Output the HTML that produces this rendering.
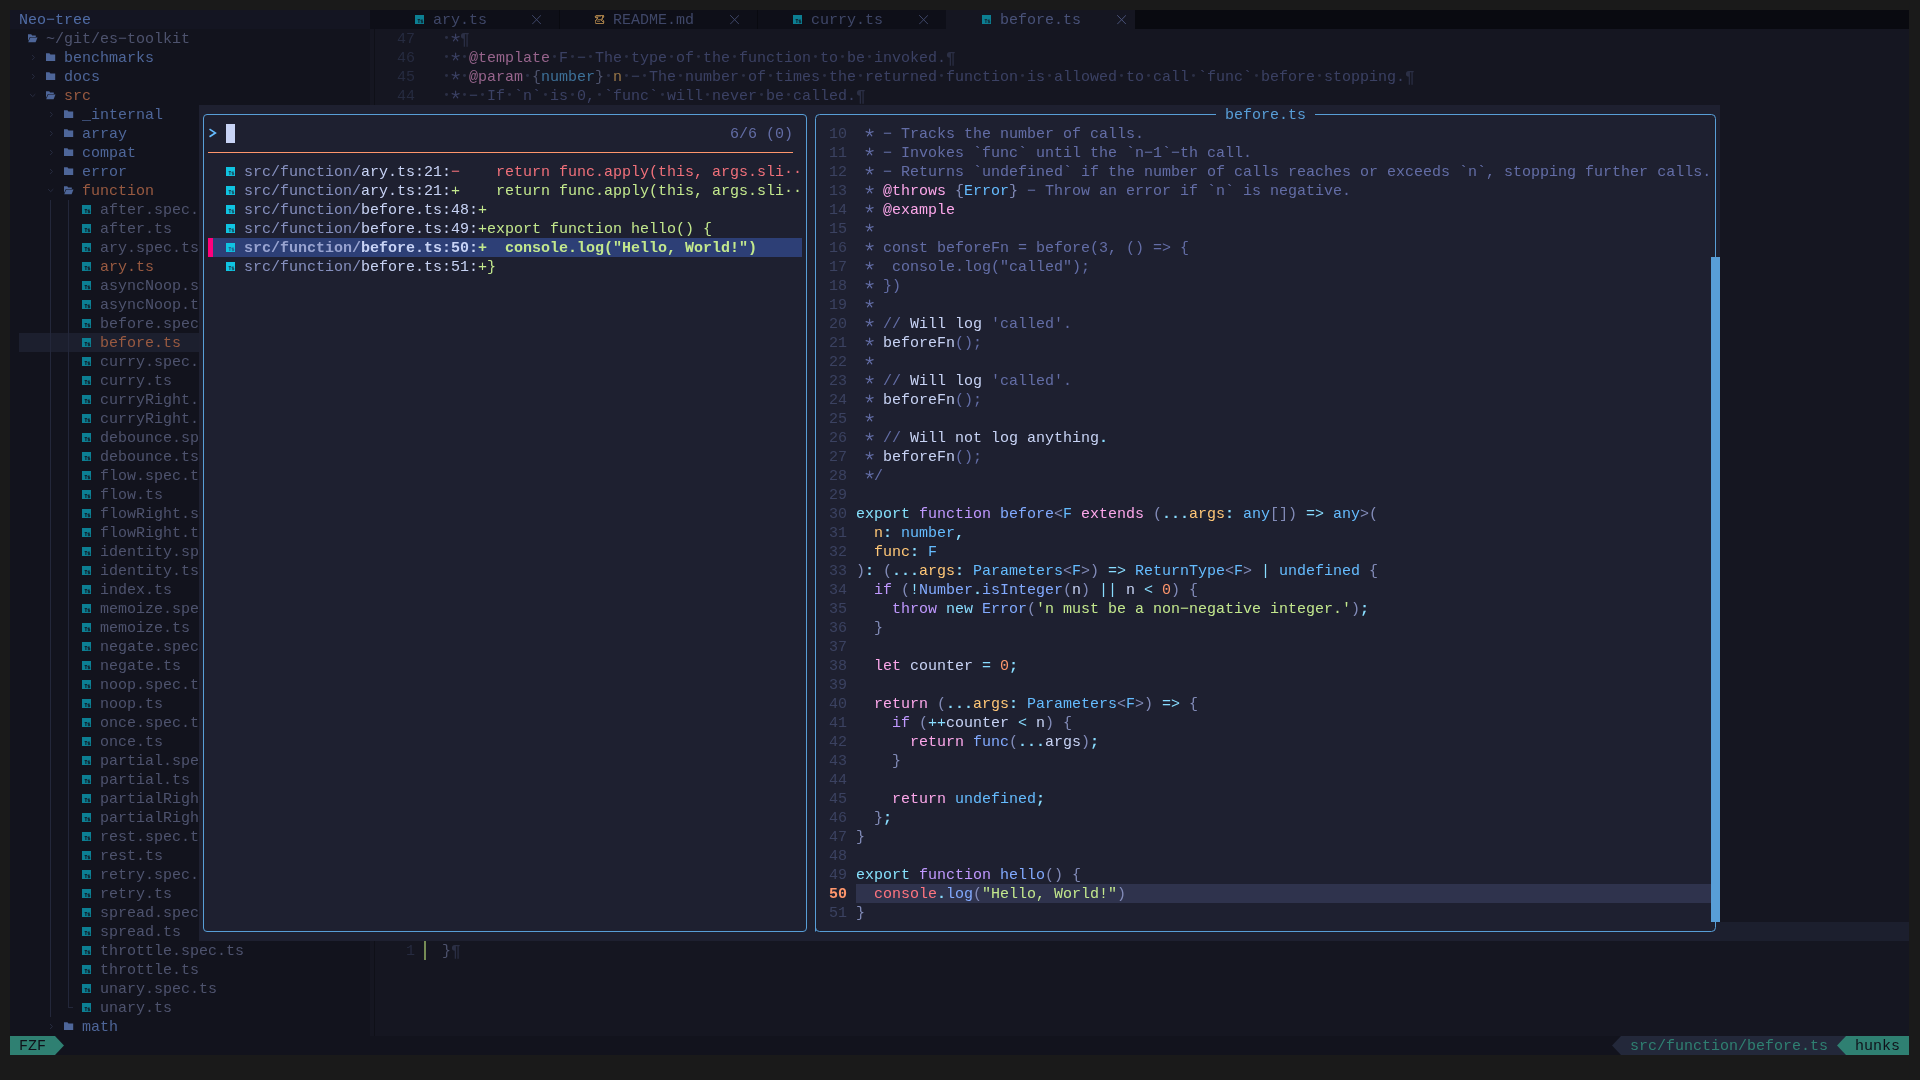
<!DOCTYPE html>
<html><head><meta charset="utf-8"><title>nvim</title>
<style>
html,body{margin:0;padding:0;background:#1a1a1a;width:1920px;height:1080px;overflow:hidden}
body{position:relative;font-family:"Liberation Mono",monospace;font-size:15px;line-height:19px}
.r{position:absolute;display:block}
.t{position:absolute;display:block;height:19px;line-height:19px;white-space:pre;font-family:"Liberation Mono",monospace;font-size:15px;padding-top:1px;box-sizing:border-box}
#L{position:absolute;left:0;top:0;width:1920px;height:1080px;will-change:transform}
.b{font-weight:bold}
.fg{color:#c8d3f5}
.dfg{color:#787f93}
.fgd{color:#828bb8}
.dfgd{color:#4e536e}
.com{color:#636da6}
.dcom{color:#3b4164}
.gut{color:#3b4261}
.dgut{color:#23283a}
.blue{color:#82aaff}
.dblue{color:#4e6699}
.blue1{color:#65bcff}
.dblue1{color:#3d7199}
.blue5{color:#89ddff}
.dblue5{color:#528599}
.cyan{color:#86e1fc}
.dcyan{color:#508797}
.mag{color:#c099ff}
.dmag{color:#735c99}
.pur{color:#fca7ea}
.dpur{color:#97648c}
.yel{color:#ffc777}
.dyel{color:#997747}
.ora{color:#ff966c}
.dora{color:#995a41}
.grn{color:#c3e88d}
.dgrn{color:#758b55}
.red{color:#ff757f}
.dred{color:#f0707a}
.teal{color:#4fd6be}
.dteal{color:#2f8072}
.bor{color:#589ed7}
.dbor{color:#355f81}
.dark3{color:#545c7e}
.ddark3{color:#32374c}
.ddot{color:#2b2f45}
.dnum{color:#262b40}
.dtab{color:#3f4768}
.dtaba{color:#495279}
.dtitle{color:#506ca6}
.dchev{color:#262b3f}
.stdark{color:#10111a}
.dirp{color:#8690bf}
.dirpb{color:#98a3d0}
</style></head><body><div id="L">
<div class="r" style="left:10px;top:10px;width:360px;height:1026px;background:#12131d;"></div>
<div class="r" style="left:10px;top:10px;width:360px;height:19px;background:#141522;"></div>
<div class="r" style="left:19px;top:333px;width:351px;height:19px;background:#1c1f2e;"></div>
<div class="r" style="left:370px;top:29px;width:1539px;height:1007px;background:#151621;"></div>
<div class="r" style="left:374px;top:29px;width:1px;height:1007px;background:#0f1018;"></div>
<div class="r" style="left:370px;top:922px;width:1539px;height:19px;background:#1c1f2e;"></div>
<div class="r" style="left:370px;top:10px;width:1539px;height:19px;background:#0e0f18;"></div>
<div class="r" style="left:946px;top:10px;width:189px;height:19px;background:#151621;"></div>
<div class="r" style="left:1135px;top:10px;width:774px;height:19px;background:#090a10;"></div>
<div class="r" style="left:559px;top:10px;width:1px;height:19px;background:#090a10;"></div>
<div class="r" style="left:757px;top:10px;width:1px;height:19px;background:#090a10;"></div>
<div class="r" style="left:10px;top:1036px;width:1899px;height:19px;background:#12131d;"></div>
<div class="r" style="left:10px;top:1036px;width:45px;height:19px;background:#2f8072;"></div>
<svg class="r" style="left:55px;top:1036px" width="9" height="19"><path d="M0 0L9 9.5L0 19z" fill="#2f8072"/></svg>
<svg class="r" style="left:1612px;top:1036px" width="9" height="19"><path d="M9 0L0 9.5L9 19z" fill="#23283a"/></svg>
<div class="r" style="left:1621px;top:1036px;width:225px;height:19px;background:#23283a;"></div>
<svg class="r" style="left:1837px;top:1036px" width="9" height="19"><path d="M9 0L0 9.5L9 19z" fill="#2f8072"/></svg>
<div class="r" style="left:1846px;top:1036px;width:63px;height:19px;background:#2f8072;"></div>
<span class="t dtitle" style="left:19px;top:10px">Neo−tree</span>
<svg class="r" style="left:28px;top:29px" width="11" height="19"><path d="M0 5.2h3.2l1 1.2h3.6v1.5h-5.9l-1.9 4.2z" fill="#4e6699"/><path d="M2.3 8.6h7.2l-1.9 4.6h-7.4z" fill="#4e6699"/></svg>
<span class="t dfgd" style="left:46px;top:29px">~/git/es−toolkit</span>
<svg class="r" style="left:28px;top:48px" width="9" height="19"><path d="M4.1 7L6.5 9.5L4.1 12" fill="none" stroke="#262b3f" stroke-width="1"/></svg>
<svg class="r" style="left:46px;top:48px" width="10" height="19"><path d="M0 5.2h3.4l1.1 1.3h4.7v6.6h-9.2z" fill="#4e6699"/></svg>
<span class="t dblue" style="left:64px;top:48px">benchmarks</span>
<svg class="r" style="left:28px;top:67px" width="9" height="19"><path d="M4.1 7L6.5 9.5L4.1 12" fill="none" stroke="#262b3f" stroke-width="1"/></svg>
<svg class="r" style="left:46px;top:67px" width="10" height="19"><path d="M0 5.2h3.4l1.1 1.3h4.7v6.6h-9.2z" fill="#4e6699"/></svg>
<span class="t dblue" style="left:64px;top:67px">docs</span>
<svg class="r" style="left:28px;top:86px" width="9" height="19"><path d="M2.1 8.1L4.7 10.7L7.3 8.1" fill="none" stroke="#262b3f" stroke-width="1"/></svg>
<svg class="r" style="left:46px;top:86px" width="11" height="19"><path d="M0 5.2h3.2l1 1.2h3.6v1.5h-5.9l-1.9 4.2z" fill="#4e6699"/><path d="M2.3 8.6h7.2l-1.9 4.6h-7.4z" fill="#4e6699"/></svg>
<span class="t dora" style="left:64px;top:86px">src</span>
<svg class="r" style="left:46px;top:105px" width="9" height="19"><path d="M4.1 7L6.5 9.5L4.1 12" fill="none" stroke="#262b3f" stroke-width="1"/></svg>
<svg class="r" style="left:64px;top:105px" width="10" height="19"><path d="M0 5.2h3.4l1.1 1.3h4.7v6.6h-9.2z" fill="#4e6699"/></svg>
<span class="t dblue" style="left:82px;top:105px">_internal</span>
<svg class="r" style="left:46px;top:124px" width="9" height="19"><path d="M4.1 7L6.5 9.5L4.1 12" fill="none" stroke="#262b3f" stroke-width="1"/></svg>
<svg class="r" style="left:64px;top:124px" width="10" height="19"><path d="M0 5.2h3.4l1.1 1.3h4.7v6.6h-9.2z" fill="#4e6699"/></svg>
<span class="t dblue" style="left:82px;top:124px">array</span>
<svg class="r" style="left:46px;top:143px" width="9" height="19"><path d="M4.1 7L6.5 9.5L4.1 12" fill="none" stroke="#262b3f" stroke-width="1"/></svg>
<svg class="r" style="left:64px;top:143px" width="10" height="19"><path d="M0 5.2h3.4l1.1 1.3h4.7v6.6h-9.2z" fill="#4e6699"/></svg>
<span class="t dblue" style="left:82px;top:143px">compat</span>
<svg class="r" style="left:46px;top:162px" width="9" height="19"><path d="M4.1 7L6.5 9.5L4.1 12" fill="none" stroke="#262b3f" stroke-width="1"/></svg>
<svg class="r" style="left:64px;top:162px" width="10" height="19"><path d="M0 5.2h3.4l1.1 1.3h4.7v6.6h-9.2z" fill="#4e6699"/></svg>
<span class="t dblue" style="left:82px;top:162px">error</span>
<svg class="r" style="left:46px;top:181px" width="9" height="19"><path d="M2.1 8.1L4.7 10.7L7.3 8.1" fill="none" stroke="#262b3f" stroke-width="1"/></svg>
<svg class="r" style="left:64px;top:181px" width="11" height="19"><path d="M0 5.2h3.2l1 1.2h3.6v1.5h-5.9l-1.9 4.2z" fill="#4e6699"/><path d="M2.3 8.6h7.2l-1.9 4.6h-7.4z" fill="#4e6699"/></svg>
<span class="t dora" style="left:82px;top:181px">function</span>
<svg class="r" style="left:82px;top:200px" width="9" height="19"><rect x="0" y="5" width="9" height="9" fill="#0c7f93"/><path d="M2.6 9.6h2.6M3.9 9.6v3.4M6 10.1h1.9M6 10.1v1.2h1.7v1.4h-1.9" fill="none" stroke="#12131d" stroke-width="0.9" opacity="1"/></svg>
<span class="t dfgd" style="left:100px;top:200px">after.spec.ts</span>
<svg class="r" style="left:82px;top:219px" width="9" height="19"><rect x="0" y="5" width="9" height="9" fill="#0c7f93"/><path d="M2.6 9.6h2.6M3.9 9.6v3.4M6 10.1h1.9M6 10.1v1.2h1.7v1.4h-1.9" fill="none" stroke="#12131d" stroke-width="0.9" opacity="1"/></svg>
<span class="t dfgd" style="left:100px;top:219px">after.ts</span>
<svg class="r" style="left:82px;top:238px" width="9" height="19"><rect x="0" y="5" width="9" height="9" fill="#0c7f93"/><path d="M2.6 9.6h2.6M3.9 9.6v3.4M6 10.1h1.9M6 10.1v1.2h1.7v1.4h-1.9" fill="none" stroke="#12131d" stroke-width="0.9" opacity="1"/></svg>
<span class="t dfgd" style="left:100px;top:238px">ary.spec.ts</span>
<svg class="r" style="left:82px;top:257px" width="9" height="19"><rect x="0" y="5" width="9" height="9" fill="#0c7f93"/><path d="M2.6 9.6h2.6M3.9 9.6v3.4M6 10.1h1.9M6 10.1v1.2h1.7v1.4h-1.9" fill="none" stroke="#12131d" stroke-width="0.9" opacity="1"/></svg>
<span class="t dora" style="left:100px;top:257px">ary.ts</span>
<svg class="r" style="left:82px;top:276px" width="9" height="19"><rect x="0" y="5" width="9" height="9" fill="#0c7f93"/><path d="M2.6 9.6h2.6M3.9 9.6v3.4M6 10.1h1.9M6 10.1v1.2h1.7v1.4h-1.9" fill="none" stroke="#12131d" stroke-width="0.9" opacity="1"/></svg>
<span class="t dfgd" style="left:100px;top:276px">asyncNoop.spec.ts</span>
<svg class="r" style="left:82px;top:295px" width="9" height="19"><rect x="0" y="5" width="9" height="9" fill="#0c7f93"/><path d="M2.6 9.6h2.6M3.9 9.6v3.4M6 10.1h1.9M6 10.1v1.2h1.7v1.4h-1.9" fill="none" stroke="#12131d" stroke-width="0.9" opacity="1"/></svg>
<span class="t dfgd" style="left:100px;top:295px">asyncNoop.ts</span>
<svg class="r" style="left:82px;top:314px" width="9" height="19"><rect x="0" y="5" width="9" height="9" fill="#0c7f93"/><path d="M2.6 9.6h2.6M3.9 9.6v3.4M6 10.1h1.9M6 10.1v1.2h1.7v1.4h-1.9" fill="none" stroke="#12131d" stroke-width="0.9" opacity="1"/></svg>
<span class="t dfgd" style="left:100px;top:314px">before.spec.ts</span>
<svg class="r" style="left:82px;top:333px" width="9" height="19"><rect x="0" y="5" width="9" height="9" fill="#0c7f93"/><path d="M2.6 9.6h2.6M3.9 9.6v3.4M6 10.1h1.9M6 10.1v1.2h1.7v1.4h-1.9" fill="none" stroke="#12131d" stroke-width="0.9" opacity="1"/></svg>
<span class="t dora" style="left:100px;top:333px">before.ts</span>
<svg class="r" style="left:82px;top:352px" width="9" height="19"><rect x="0" y="5" width="9" height="9" fill="#0c7f93"/><path d="M2.6 9.6h2.6M3.9 9.6v3.4M6 10.1h1.9M6 10.1v1.2h1.7v1.4h-1.9" fill="none" stroke="#12131d" stroke-width="0.9" opacity="1"/></svg>
<span class="t dfgd" style="left:100px;top:352px">curry.spec.ts</span>
<svg class="r" style="left:82px;top:371px" width="9" height="19"><rect x="0" y="5" width="9" height="9" fill="#0c7f93"/><path d="M2.6 9.6h2.6M3.9 9.6v3.4M6 10.1h1.9M6 10.1v1.2h1.7v1.4h-1.9" fill="none" stroke="#12131d" stroke-width="0.9" opacity="1"/></svg>
<span class="t dfgd" style="left:100px;top:371px">curry.ts</span>
<svg class="r" style="left:82px;top:390px" width="9" height="19"><rect x="0" y="5" width="9" height="9" fill="#0c7f93"/><path d="M2.6 9.6h2.6M3.9 9.6v3.4M6 10.1h1.9M6 10.1v1.2h1.7v1.4h-1.9" fill="none" stroke="#12131d" stroke-width="0.9" opacity="1"/></svg>
<span class="t dfgd" style="left:100px;top:390px">curryRight.spec.ts</span>
<svg class="r" style="left:82px;top:409px" width="9" height="19"><rect x="0" y="5" width="9" height="9" fill="#0c7f93"/><path d="M2.6 9.6h2.6M3.9 9.6v3.4M6 10.1h1.9M6 10.1v1.2h1.7v1.4h-1.9" fill="none" stroke="#12131d" stroke-width="0.9" opacity="1"/></svg>
<span class="t dfgd" style="left:100px;top:409px">curryRight.ts</span>
<svg class="r" style="left:82px;top:428px" width="9" height="19"><rect x="0" y="5" width="9" height="9" fill="#0c7f93"/><path d="M2.6 9.6h2.6M3.9 9.6v3.4M6 10.1h1.9M6 10.1v1.2h1.7v1.4h-1.9" fill="none" stroke="#12131d" stroke-width="0.9" opacity="1"/></svg>
<span class="t dfgd" style="left:100px;top:428px">debounce.spec.ts</span>
<svg class="r" style="left:82px;top:447px" width="9" height="19"><rect x="0" y="5" width="9" height="9" fill="#0c7f93"/><path d="M2.6 9.6h2.6M3.9 9.6v3.4M6 10.1h1.9M6 10.1v1.2h1.7v1.4h-1.9" fill="none" stroke="#12131d" stroke-width="0.9" opacity="1"/></svg>
<span class="t dfgd" style="left:100px;top:447px">debounce.ts</span>
<svg class="r" style="left:82px;top:466px" width="9" height="19"><rect x="0" y="5" width="9" height="9" fill="#0c7f93"/><path d="M2.6 9.6h2.6M3.9 9.6v3.4M6 10.1h1.9M6 10.1v1.2h1.7v1.4h-1.9" fill="none" stroke="#12131d" stroke-width="0.9" opacity="1"/></svg>
<span class="t dfgd" style="left:100px;top:466px">flow.spec.ts</span>
<svg class="r" style="left:82px;top:485px" width="9" height="19"><rect x="0" y="5" width="9" height="9" fill="#0c7f93"/><path d="M2.6 9.6h2.6M3.9 9.6v3.4M6 10.1h1.9M6 10.1v1.2h1.7v1.4h-1.9" fill="none" stroke="#12131d" stroke-width="0.9" opacity="1"/></svg>
<span class="t dfgd" style="left:100px;top:485px">flow.ts</span>
<svg class="r" style="left:82px;top:504px" width="9" height="19"><rect x="0" y="5" width="9" height="9" fill="#0c7f93"/><path d="M2.6 9.6h2.6M3.9 9.6v3.4M6 10.1h1.9M6 10.1v1.2h1.7v1.4h-1.9" fill="none" stroke="#12131d" stroke-width="0.9" opacity="1"/></svg>
<span class="t dfgd" style="left:100px;top:504px">flowRight.spec.ts</span>
<svg class="r" style="left:82px;top:523px" width="9" height="19"><rect x="0" y="5" width="9" height="9" fill="#0c7f93"/><path d="M2.6 9.6h2.6M3.9 9.6v3.4M6 10.1h1.9M6 10.1v1.2h1.7v1.4h-1.9" fill="none" stroke="#12131d" stroke-width="0.9" opacity="1"/></svg>
<span class="t dfgd" style="left:100px;top:523px">flowRight.ts</span>
<svg class="r" style="left:82px;top:542px" width="9" height="19"><rect x="0" y="5" width="9" height="9" fill="#0c7f93"/><path d="M2.6 9.6h2.6M3.9 9.6v3.4M6 10.1h1.9M6 10.1v1.2h1.7v1.4h-1.9" fill="none" stroke="#12131d" stroke-width="0.9" opacity="1"/></svg>
<span class="t dfgd" style="left:100px;top:542px">identity.spec.ts</span>
<svg class="r" style="left:82px;top:561px" width="9" height="19"><rect x="0" y="5" width="9" height="9" fill="#0c7f93"/><path d="M2.6 9.6h2.6M3.9 9.6v3.4M6 10.1h1.9M6 10.1v1.2h1.7v1.4h-1.9" fill="none" stroke="#12131d" stroke-width="0.9" opacity="1"/></svg>
<span class="t dfgd" style="left:100px;top:561px">identity.ts</span>
<svg class="r" style="left:82px;top:580px" width="9" height="19"><rect x="0" y="5" width="9" height="9" fill="#0c7f93"/><path d="M2.6 9.6h2.6M3.9 9.6v3.4M6 10.1h1.9M6 10.1v1.2h1.7v1.4h-1.9" fill="none" stroke="#12131d" stroke-width="0.9" opacity="1"/></svg>
<span class="t dfgd" style="left:100px;top:580px">index.ts</span>
<svg class="r" style="left:82px;top:599px" width="9" height="19"><rect x="0" y="5" width="9" height="9" fill="#0c7f93"/><path d="M2.6 9.6h2.6M3.9 9.6v3.4M6 10.1h1.9M6 10.1v1.2h1.7v1.4h-1.9" fill="none" stroke="#12131d" stroke-width="0.9" opacity="1"/></svg>
<span class="t dfgd" style="left:100px;top:599px">memoize.spec.ts</span>
<svg class="r" style="left:82px;top:618px" width="9" height="19"><rect x="0" y="5" width="9" height="9" fill="#0c7f93"/><path d="M2.6 9.6h2.6M3.9 9.6v3.4M6 10.1h1.9M6 10.1v1.2h1.7v1.4h-1.9" fill="none" stroke="#12131d" stroke-width="0.9" opacity="1"/></svg>
<span class="t dfgd" style="left:100px;top:618px">memoize.ts</span>
<svg class="r" style="left:82px;top:637px" width="9" height="19"><rect x="0" y="5" width="9" height="9" fill="#0c7f93"/><path d="M2.6 9.6h2.6M3.9 9.6v3.4M6 10.1h1.9M6 10.1v1.2h1.7v1.4h-1.9" fill="none" stroke="#12131d" stroke-width="0.9" opacity="1"/></svg>
<span class="t dfgd" style="left:100px;top:637px">negate.spec.ts</span>
<svg class="r" style="left:82px;top:656px" width="9" height="19"><rect x="0" y="5" width="9" height="9" fill="#0c7f93"/><path d="M2.6 9.6h2.6M3.9 9.6v3.4M6 10.1h1.9M6 10.1v1.2h1.7v1.4h-1.9" fill="none" stroke="#12131d" stroke-width="0.9" opacity="1"/></svg>
<span class="t dfgd" style="left:100px;top:656px">negate.ts</span>
<svg class="r" style="left:82px;top:675px" width="9" height="19"><rect x="0" y="5" width="9" height="9" fill="#0c7f93"/><path d="M2.6 9.6h2.6M3.9 9.6v3.4M6 10.1h1.9M6 10.1v1.2h1.7v1.4h-1.9" fill="none" stroke="#12131d" stroke-width="0.9" opacity="1"/></svg>
<span class="t dfgd" style="left:100px;top:675px">noop.spec.ts</span>
<svg class="r" style="left:82px;top:694px" width="9" height="19"><rect x="0" y="5" width="9" height="9" fill="#0c7f93"/><path d="M2.6 9.6h2.6M3.9 9.6v3.4M6 10.1h1.9M6 10.1v1.2h1.7v1.4h-1.9" fill="none" stroke="#12131d" stroke-width="0.9" opacity="1"/></svg>
<span class="t dfgd" style="left:100px;top:694px">noop.ts</span>
<svg class="r" style="left:82px;top:713px" width="9" height="19"><rect x="0" y="5" width="9" height="9" fill="#0c7f93"/><path d="M2.6 9.6h2.6M3.9 9.6v3.4M6 10.1h1.9M6 10.1v1.2h1.7v1.4h-1.9" fill="none" stroke="#12131d" stroke-width="0.9" opacity="1"/></svg>
<span class="t dfgd" style="left:100px;top:713px">once.spec.ts</span>
<svg class="r" style="left:82px;top:732px" width="9" height="19"><rect x="0" y="5" width="9" height="9" fill="#0c7f93"/><path d="M2.6 9.6h2.6M3.9 9.6v3.4M6 10.1h1.9M6 10.1v1.2h1.7v1.4h-1.9" fill="none" stroke="#12131d" stroke-width="0.9" opacity="1"/></svg>
<span class="t dfgd" style="left:100px;top:732px">once.ts</span>
<svg class="r" style="left:82px;top:751px" width="9" height="19"><rect x="0" y="5" width="9" height="9" fill="#0c7f93"/><path d="M2.6 9.6h2.6M3.9 9.6v3.4M6 10.1h1.9M6 10.1v1.2h1.7v1.4h-1.9" fill="none" stroke="#12131d" stroke-width="0.9" opacity="1"/></svg>
<span class="t dfgd" style="left:100px;top:751px">partial.spec.ts</span>
<svg class="r" style="left:82px;top:770px" width="9" height="19"><rect x="0" y="5" width="9" height="9" fill="#0c7f93"/><path d="M2.6 9.6h2.6M3.9 9.6v3.4M6 10.1h1.9M6 10.1v1.2h1.7v1.4h-1.9" fill="none" stroke="#12131d" stroke-width="0.9" opacity="1"/></svg>
<span class="t dfgd" style="left:100px;top:770px">partial.ts</span>
<svg class="r" style="left:82px;top:789px" width="9" height="19"><rect x="0" y="5" width="9" height="9" fill="#0c7f93"/><path d="M2.6 9.6h2.6M3.9 9.6v3.4M6 10.1h1.9M6 10.1v1.2h1.7v1.4h-1.9" fill="none" stroke="#12131d" stroke-width="0.9" opacity="1"/></svg>
<span class="t dfgd" style="left:100px;top:789px">partialRight.spec.ts</span>
<svg class="r" style="left:82px;top:808px" width="9" height="19"><rect x="0" y="5" width="9" height="9" fill="#0c7f93"/><path d="M2.6 9.6h2.6M3.9 9.6v3.4M6 10.1h1.9M6 10.1v1.2h1.7v1.4h-1.9" fill="none" stroke="#12131d" stroke-width="0.9" opacity="1"/></svg>
<span class="t dfgd" style="left:100px;top:808px">partialRight.ts</span>
<svg class="r" style="left:82px;top:827px" width="9" height="19"><rect x="0" y="5" width="9" height="9" fill="#0c7f93"/><path d="M2.6 9.6h2.6M3.9 9.6v3.4M6 10.1h1.9M6 10.1v1.2h1.7v1.4h-1.9" fill="none" stroke="#12131d" stroke-width="0.9" opacity="1"/></svg>
<span class="t dfgd" style="left:100px;top:827px">rest.spec.ts</span>
<svg class="r" style="left:82px;top:846px" width="9" height="19"><rect x="0" y="5" width="9" height="9" fill="#0c7f93"/><path d="M2.6 9.6h2.6M3.9 9.6v3.4M6 10.1h1.9M6 10.1v1.2h1.7v1.4h-1.9" fill="none" stroke="#12131d" stroke-width="0.9" opacity="1"/></svg>
<span class="t dfgd" style="left:100px;top:846px">rest.ts</span>
<svg class="r" style="left:82px;top:865px" width="9" height="19"><rect x="0" y="5" width="9" height="9" fill="#0c7f93"/><path d="M2.6 9.6h2.6M3.9 9.6v3.4M6 10.1h1.9M6 10.1v1.2h1.7v1.4h-1.9" fill="none" stroke="#12131d" stroke-width="0.9" opacity="1"/></svg>
<span class="t dfgd" style="left:100px;top:865px">retry.spec.ts</span>
<svg class="r" style="left:82px;top:884px" width="9" height="19"><rect x="0" y="5" width="9" height="9" fill="#0c7f93"/><path d="M2.6 9.6h2.6M3.9 9.6v3.4M6 10.1h1.9M6 10.1v1.2h1.7v1.4h-1.9" fill="none" stroke="#12131d" stroke-width="0.9" opacity="1"/></svg>
<span class="t dfgd" style="left:100px;top:884px">retry.ts</span>
<svg class="r" style="left:82px;top:903px" width="9" height="19"><rect x="0" y="5" width="9" height="9" fill="#0c7f93"/><path d="M2.6 9.6h2.6M3.9 9.6v3.4M6 10.1h1.9M6 10.1v1.2h1.7v1.4h-1.9" fill="none" stroke="#12131d" stroke-width="0.9" opacity="1"/></svg>
<span class="t dfgd" style="left:100px;top:903px">spread.spec.ts</span>
<svg class="r" style="left:82px;top:922px" width="9" height="19"><rect x="0" y="5" width="9" height="9" fill="#0c7f93"/><path d="M2.6 9.6h2.6M3.9 9.6v3.4M6 10.1h1.9M6 10.1v1.2h1.7v1.4h-1.9" fill="none" stroke="#12131d" stroke-width="0.9" opacity="1"/></svg>
<span class="t dfgd" style="left:100px;top:922px">spread.ts</span>
<svg class="r" style="left:82px;top:941px" width="9" height="19"><rect x="0" y="5" width="9" height="9" fill="#0c7f93"/><path d="M2.6 9.6h2.6M3.9 9.6v3.4M6 10.1h1.9M6 10.1v1.2h1.7v1.4h-1.9" fill="none" stroke="#12131d" stroke-width="0.9" opacity="1"/></svg>
<span class="t dfgd" style="left:100px;top:941px">throttle.spec.ts</span>
<svg class="r" style="left:82px;top:960px" width="9" height="19"><rect x="0" y="5" width="9" height="9" fill="#0c7f93"/><path d="M2.6 9.6h2.6M3.9 9.6v3.4M6 10.1h1.9M6 10.1v1.2h1.7v1.4h-1.9" fill="none" stroke="#12131d" stroke-width="0.9" opacity="1"/></svg>
<span class="t dfgd" style="left:100px;top:960px">throttle.ts</span>
<svg class="r" style="left:82px;top:979px" width="9" height="19"><rect x="0" y="5" width="9" height="9" fill="#0c7f93"/><path d="M2.6 9.6h2.6M3.9 9.6v3.4M6 10.1h1.9M6 10.1v1.2h1.7v1.4h-1.9" fill="none" stroke="#12131d" stroke-width="0.9" opacity="1"/></svg>
<span class="t dfgd" style="left:100px;top:979px">unary.spec.ts</span>
<svg class="r" style="left:82px;top:998px" width="9" height="19"><rect x="0" y="5" width="9" height="9" fill="#0c7f93"/><path d="M2.6 9.6h2.6M3.9 9.6v3.4M6 10.1h1.9M6 10.1v1.2h1.7v1.4h-1.9" fill="none" stroke="#12131d" stroke-width="0.9" opacity="1"/></svg>
<span class="t dfgd" style="left:100px;top:998px">unary.ts</span>
<svg class="r" style="left:46px;top:1017px" width="9" height="19"><path d="M4.1 7L6.5 9.5L4.1 12" fill="none" stroke="#262b3f" stroke-width="1"/></svg>
<svg class="r" style="left:64px;top:1017px" width="10" height="19"><path d="M0 5.2h3.4l1.1 1.3h4.7v6.6h-9.2z" fill="#4e6699"/></svg>
<span class="t dblue" style="left:82px;top:1017px">math</span>
<div class="r" style="left:50px;top:200px;width:1px;height:817px;background:#23273a;"></div>
<div class="r" style="left:68px;top:200px;width:1px;height:808px;background:#23273a;"></div>
<div class="r" style="left:68px;top:1007px;width:5px;height:1px;background:#23273a;"></div>
<svg class="r" style="left:415px;top:10px" width="9" height="19"><rect x="0" y="5" width="9" height="9" fill="#0c7f93"/><path d="M2.6 9.6h2.6M3.9 9.6v3.4M6 10.1h1.9M6 10.1v1.2h1.7v1.4h-1.9" fill="none" stroke="#0e0f18" stroke-width="0.9" opacity="0.85"/></svg>
<span class="t dtab" style="left:433px;top:10px">ary.ts</span>
<svg class="r" style="left:532px;top:10px" width="9" height="19"><path d="M0.2 5.2l8.8 9M9 5.2l-8.8 9" stroke="#3f4768" stroke-width="1" fill="none"/></svg>
<div class="r" style="left:595px;top:15px;width:1px;height:1px;background:#a37c47;opacity:0.3"></div>
<div class="r" style="left:596px;top:15px;width:1px;height:1px;background:#a37c47;opacity:1"></div>
<div class="r" style="left:597px;top:15px;width:1px;height:1px;background:#a37c47;opacity:1"></div>
<div class="r" style="left:598px;top:15px;width:1px;height:1px;background:#a37c47;opacity:1"></div>
<div class="r" style="left:599px;top:15px;width:1px;height:1px;background:#a37c47;opacity:1"></div>
<div class="r" style="left:600px;top:15px;width:1px;height:1px;background:#a37c47;opacity:1"></div>
<div class="r" style="left:601px;top:15px;width:1px;height:1px;background:#a37c47;opacity:1"></div>
<div class="r" style="left:602px;top:15px;width:1px;height:1px;background:#a37c47;opacity:1"></div>
<div class="r" style="left:603px;top:15px;width:1px;height:1px;background:#a37c47;opacity:1"></div>
<div class="r" style="left:594px;top:16px;width:1px;height:1px;background:#a37c47;opacity:0.2"></div>
<div class="r" style="left:595px;top:16px;width:1px;height:1px;background:#a37c47;opacity:1"></div>
<div class="r" style="left:596px;top:16px;width:1px;height:1px;background:#a37c47;opacity:0.6"></div>
<div class="r" style="left:597px;top:16px;width:1px;height:1px;background:#a37c47;opacity:0.6"></div>
<div class="r" style="left:598px;top:16px;width:1px;height:1px;background:#a37c47;opacity:0.6"></div>
<div class="r" style="left:599px;top:16px;width:1px;height:1px;background:#a37c47;opacity:0.6"></div>
<div class="r" style="left:600px;top:16px;width:1px;height:1px;background:#a37c47;opacity:0.6"></div>
<div class="r" style="left:602px;top:16px;width:1px;height:1px;background:#a37c47;opacity:1"></div>
<div class="r" style="left:603px;top:16px;width:1px;height:1px;background:#a37c47;opacity:1"></div>
<div class="r" style="left:604px;top:16px;width:1px;height:1px;background:#a37c47;opacity:0.2"></div>
<div class="r" style="left:595px;top:17px;width:1px;height:1px;background:#a37c47;opacity:1"></div>
<div class="r" style="left:596px;top:17px;width:1px;height:1px;background:#a37c47;opacity:1"></div>
<div class="r" style="left:597px;top:17px;width:1px;height:1px;background:#a37c47;opacity:1"></div>
<div class="r" style="left:598px;top:17px;width:1px;height:1px;background:#a37c47;opacity:0.2"></div>
<div class="r" style="left:602px;top:17px;width:1px;height:1px;background:#a37c47;opacity:1"></div>
<div class="r" style="left:603px;top:17px;width:1px;height:1px;background:#a37c47;opacity:0.8"></div>
<div class="r" style="left:596px;top:18px;width:1px;height:1px;background:#a37c47;opacity:0.5"></div>
<div class="r" style="left:597px;top:18px;width:1px;height:1px;background:#a37c47;opacity:1"></div>
<div class="r" style="left:601px;top:18px;width:1px;height:1px;background:#a37c47;opacity:0.5"></div>
<div class="r" style="left:602px;top:18px;width:1px;height:1px;background:#a37c47;opacity:1"></div>
<div class="r" style="left:596px;top:19px;width:1px;height:1px;background:#a37c47;opacity:1"></div>
<div class="r" style="left:597px;top:19px;width:1px;height:1px;background:#a37c47;opacity:0.4"></div>
<div class="r" style="left:598px;top:19px;width:1px;height:1px;background:#a37c47;opacity:0.8"></div>
<div class="r" style="left:599px;top:19px;width:1px;height:1px;background:#a37c47;opacity:0.8"></div>
<div class="r" style="left:600px;top:19px;width:1px;height:1px;background:#a37c47;opacity:0.8"></div>
<div class="r" style="left:601px;top:19px;width:1px;height:1px;background:#a37c47;opacity:0.8"></div>
<div class="r" style="left:602px;top:19px;width:1px;height:1px;background:#a37c47;opacity:0.8"></div>
<div class="r" style="left:595px;top:20px;width:1px;height:1px;background:#a37c47;opacity:1"></div>
<div class="r" style="left:596px;top:20px;width:1px;height:1px;background:#a37c47;opacity:0.5"></div>
<div class="r" style="left:597px;top:20px;width:1px;height:1px;background:#a37c47;opacity:0.3"></div>
<div class="r" style="left:598px;top:20px;width:1px;height:1px;background:#a37c47;opacity:0.3"></div>
<div class="r" style="left:599px;top:20px;width:1px;height:1px;background:#a37c47;opacity:0.3"></div>
<div class="r" style="left:600px;top:20px;width:1px;height:1px;background:#a37c47;opacity:0.3"></div>
<div class="r" style="left:601px;top:20px;width:1px;height:1px;background:#a37c47;opacity:1"></div>
<div class="r" style="left:602px;top:20px;width:1px;height:1px;background:#a37c47;opacity:0.2"></div>
<div class="r" style="left:603px;top:20px;width:1px;height:1px;background:#a37c47;opacity:0.8"></div>
<div class="r" style="left:595px;top:21px;width:1px;height:1px;background:#a37c47;opacity:0.8"></div>
<div class="r" style="left:597px;top:21px;width:1px;height:1px;background:#a37c47;opacity:0.6"></div>
<div class="r" style="left:598px;top:21px;width:1px;height:1px;background:#a37c47;opacity:0.6"></div>
<div class="r" style="left:599px;top:21px;width:1px;height:1px;background:#a37c47;opacity:0.6"></div>
<div class="r" style="left:602px;top:21px;width:1px;height:1px;background:#a37c47;opacity:1"></div>
<div class="r" style="left:603px;top:21px;width:1px;height:1px;background:#a37c47;opacity:1"></div>
<div class="r" style="left:604px;top:21px;width:1px;height:1px;background:#a37c47;opacity:0.2"></div>
<div class="r" style="left:595px;top:22px;width:1px;height:1px;background:#a37c47;opacity:0.8"></div>
<div class="r" style="left:596px;top:22px;width:1px;height:1px;background:#a37c47;opacity:0.1"></div>
<div class="r" style="left:603px;top:22px;width:1px;height:1px;background:#a37c47;opacity:1"></div>
<div class="r" style="left:604px;top:22px;width:1px;height:1px;background:#a37c47;opacity:0.2"></div>
<div class="r" style="left:595px;top:23px;width:1px;height:1px;background:#a37c47;opacity:0.6"></div>
<div class="r" style="left:596px;top:23px;width:1px;height:1px;background:#a37c47;opacity:1"></div>
<div class="r" style="left:597px;top:23px;width:1px;height:1px;background:#a37c47;opacity:1"></div>
<div class="r" style="left:598px;top:23px;width:1px;height:1px;background:#a37c47;opacity:1"></div>
<div class="r" style="left:599px;top:23px;width:1px;height:1px;background:#a37c47;opacity:1"></div>
<div class="r" style="left:600px;top:23px;width:1px;height:1px;background:#a37c47;opacity:1"></div>
<div class="r" style="left:601px;top:23px;width:1px;height:1px;background:#a37c47;opacity:1"></div>
<div class="r" style="left:602px;top:23px;width:1px;height:1px;background:#a37c47;opacity:1"></div>
<div class="r" style="left:603px;top:23px;width:1px;height:1px;background:#a37c47;opacity:0.9"></div>
<span class="t dtab" style="left:613px;top:10px">README.md</span>
<svg class="r" style="left:730px;top:10px" width="9" height="19"><path d="M0.2 5.2l8.8 9M9 5.2l-8.8 9" stroke="#3f4768" stroke-width="1" fill="none"/></svg>
<svg class="r" style="left:793px;top:10px" width="9" height="19"><rect x="0" y="5" width="9" height="9" fill="#0c7f93"/><path d="M2.6 9.6h2.6M3.9 9.6v3.4M6 10.1h1.9M6 10.1v1.2h1.7v1.4h-1.9" fill="none" stroke="#0e0f18" stroke-width="0.9" opacity="0.85"/></svg>
<span class="t dtab" style="left:811px;top:10px">curry.ts</span>
<svg class="r" style="left:919px;top:10px" width="9" height="19"><path d="M0.2 5.2l8.8 9M9 5.2l-8.8 9" stroke="#3f4768" stroke-width="1" fill="none"/></svg>
<svg class="r" style="left:982px;top:10px" width="9" height="19"><rect x="0" y="5" width="9" height="9" fill="#0c7f93"/><path d="M2.6 9.6h2.6M3.9 9.6v3.4M6 10.1h1.9M6 10.1v1.2h1.7v1.4h-1.9" fill="none" stroke="#151621" stroke-width="0.9" opacity="0.85"/></svg>
<span class="t dtaba" style="left:1000px;top:10px">before.ts</span>
<svg class="r" style="left:1117px;top:10px" width="9" height="19"><path d="M0.2 5.2l8.8 9M9 5.2l-8.8 9" stroke="#495279" stroke-width="1" fill="none"/></svg>
<span class="t dnum" style="left:397px;top:29px">47</span>
<div class="r" style="left:445.1px;top:36.3px;width:2.8px;height:2.8px;background:#2b2f45;border-radius:50%"></div>
<svg class="r" style="left:451px;top:29px" width="9" height="19"><path d="M4.60 8.80L4.60 5.10M4.60 8.80L8.12 7.66M4.60 8.80L6.77 11.79M4.60 8.80L2.43 11.79M4.60 8.80L1.08 7.66" fill="none" stroke="#3b4164" stroke-width="1.15" stroke-linecap="round"/></svg>
<span class="t b ddot" style="left:460px;top:30px;font-size:16px">¶</span>
<span class="t dnum" style="left:397px;top:48px">46</span>
<div class="r" style="left:445.1px;top:55.3px;width:2.8px;height:2.8px;background:#2b2f45;border-radius:50%"></div>
<svg class="r" style="left:451px;top:48px" width="9" height="19"><path d="M4.60 8.80L4.60 5.10M4.60 8.80L8.12 7.66M4.60 8.80L6.77 11.79M4.60 8.80L2.43 11.79M4.60 8.80L1.08 7.66" fill="none" stroke="#3b4164" stroke-width="1.15" stroke-linecap="round"/></svg>
<div class="r" style="left:463.1px;top:55.3px;width:2.8px;height:2.8px;background:#2b2f45;border-radius:50%"></div>
<span class="t dpur" style="left:469px;top:48px">@template</span>
<div class="r" style="left:553.1px;top:55.3px;width:2.8px;height:2.8px;background:#2b2f45;border-radius:50%"></div>
<span class="t dcom" style="left:559px;top:48px">F</span>
<div class="r" style="left:571.1px;top:55.3px;width:2.8px;height:2.8px;background:#2b2f45;border-radius:50%"></div>
<span class="t dcom" style="left:577px;top:48px">−</span>
<div class="r" style="left:589.1px;top:55.3px;width:2.8px;height:2.8px;background:#2b2f45;border-radius:50%"></div>
<span class="t dcom" style="left:595px;top:48px">The</span>
<div class="r" style="left:625.1px;top:55.3px;width:2.8px;height:2.8px;background:#2b2f45;border-radius:50%"></div>
<span class="t dcom" style="left:631px;top:48px">type</span>
<div class="r" style="left:670.1px;top:55.3px;width:2.8px;height:2.8px;background:#2b2f45;border-radius:50%"></div>
<span class="t dcom" style="left:676px;top:48px">of</span>
<div class="r" style="left:697.1px;top:55.3px;width:2.8px;height:2.8px;background:#2b2f45;border-radius:50%"></div>
<span class="t dcom" style="left:703px;top:48px">the</span>
<div class="r" style="left:733.1px;top:55.3px;width:2.8px;height:2.8px;background:#2b2f45;border-radius:50%"></div>
<span class="t dcom" style="left:739px;top:48px">function</span>
<div class="r" style="left:814.1px;top:55.3px;width:2.8px;height:2.8px;background:#2b2f45;border-radius:50%"></div>
<span class="t dcom" style="left:820px;top:48px">to</span>
<div class="r" style="left:841.1px;top:55.3px;width:2.8px;height:2.8px;background:#2b2f45;border-radius:50%"></div>
<span class="t dcom" style="left:847px;top:48px">be</span>
<div class="r" style="left:868.1px;top:55.3px;width:2.8px;height:2.8px;background:#2b2f45;border-radius:50%"></div>
<span class="t dcom" style="left:874px;top:48px">invoked.</span>
<span class="t b ddot" style="left:946px;top:49px;font-size:16px">¶</span>
<span class="t dnum" style="left:397px;top:67px">45</span>
<div class="r" style="left:445.1px;top:74.3px;width:2.8px;height:2.8px;background:#2b2f45;border-radius:50%"></div>
<svg class="r" style="left:451px;top:67px" width="9" height="19"><path d="M4.60 8.80L4.60 5.10M4.60 8.80L8.12 7.66M4.60 8.80L6.77 11.79M4.60 8.80L2.43 11.79M4.60 8.80L1.08 7.66" fill="none" stroke="#3b4164" stroke-width="1.15" stroke-linecap="round"/></svg>
<div class="r" style="left:463.1px;top:74.3px;width:2.8px;height:2.8px;background:#2b2f45;border-radius:50%"></div>
<span class="t dpur" style="left:469px;top:67px">@param</span>
<div class="r" style="left:526.1px;top:74.3px;width:2.8px;height:2.8px;background:#2b2f45;border-radius:50%"></div>
<span class="t dfgd" style="left:532px;top:67px">{</span>
<span class="t dblue1" style="left:541px;top:67px">number</span>
<span class="t dfgd" style="left:595px;top:67px">}</span>
<div class="r" style="left:607.1px;top:74.3px;width:2.8px;height:2.8px;background:#2b2f45;border-radius:50%"></div>
<span class="t dyel" style="left:613px;top:67px">n</span>
<div class="r" style="left:625.1px;top:74.3px;width:2.8px;height:2.8px;background:#2b2f45;border-radius:50%"></div>
<span class="t dcom" style="left:631px;top:67px">−</span>
<div class="r" style="left:643.1px;top:74.3px;width:2.8px;height:2.8px;background:#2b2f45;border-radius:50%"></div>
<span class="t dcom" style="left:649px;top:67px">The</span>
<div class="r" style="left:679.1px;top:74.3px;width:2.8px;height:2.8px;background:#2b2f45;border-radius:50%"></div>
<span class="t dcom" style="left:685px;top:67px">number</span>
<div class="r" style="left:742.1px;top:74.3px;width:2.8px;height:2.8px;background:#2b2f45;border-radius:50%"></div>
<span class="t dcom" style="left:748px;top:67px">of</span>
<div class="r" style="left:769.1px;top:74.3px;width:2.8px;height:2.8px;background:#2b2f45;border-radius:50%"></div>
<span class="t dcom" style="left:775px;top:67px">times</span>
<div class="r" style="left:823.1px;top:74.3px;width:2.8px;height:2.8px;background:#2b2f45;border-radius:50%"></div>
<span class="t dcom" style="left:829px;top:67px">the</span>
<div class="r" style="left:859.1px;top:74.3px;width:2.8px;height:2.8px;background:#2b2f45;border-radius:50%"></div>
<span class="t dcom" style="left:865px;top:67px">returned</span>
<div class="r" style="left:940.1px;top:74.3px;width:2.8px;height:2.8px;background:#2b2f45;border-radius:50%"></div>
<span class="t dcom" style="left:946px;top:67px">function</span>
<div class="r" style="left:1021.1px;top:74.3px;width:2.8px;height:2.8px;background:#2b2f45;border-radius:50%"></div>
<span class="t dcom" style="left:1027px;top:67px">is</span>
<div class="r" style="left:1048.1px;top:74.3px;width:2.8px;height:2.8px;background:#2b2f45;border-radius:50%"></div>
<span class="t dcom" style="left:1054px;top:67px">allowed</span>
<div class="r" style="left:1120.1px;top:74.3px;width:2.8px;height:2.8px;background:#2b2f45;border-radius:50%"></div>
<span class="t dcom" style="left:1126px;top:67px">to</span>
<div class="r" style="left:1147.1px;top:74.3px;width:2.8px;height:2.8px;background:#2b2f45;border-radius:50%"></div>
<span class="t dcom" style="left:1153px;top:67px">call</span>
<div class="r" style="left:1192.1px;top:74.3px;width:2.8px;height:2.8px;background:#2b2f45;border-radius:50%"></div>
<span class="t dcom" style="left:1198px;top:67px">`func`</span>
<div class="r" style="left:1255.1px;top:74.3px;width:2.8px;height:2.8px;background:#2b2f45;border-radius:50%"></div>
<span class="t dcom" style="left:1261px;top:67px">before</span>
<div class="r" style="left:1318.1px;top:74.3px;width:2.8px;height:2.8px;background:#2b2f45;border-radius:50%"></div>
<span class="t dcom" style="left:1324px;top:67px">stopping.</span>
<span class="t b ddot" style="left:1405px;top:68px;font-size:16px">¶</span>
<span class="t dnum" style="left:397px;top:86px">44</span>
<div class="r" style="left:445.1px;top:93.3px;width:2.8px;height:2.8px;background:#2b2f45;border-radius:50%"></div>
<svg class="r" style="left:451px;top:86px" width="9" height="19"><path d="M4.60 8.80L4.60 5.10M4.60 8.80L8.12 7.66M4.60 8.80L6.77 11.79M4.60 8.80L2.43 11.79M4.60 8.80L1.08 7.66" fill="none" stroke="#3b4164" stroke-width="1.15" stroke-linecap="round"/></svg>
<div class="r" style="left:463.1px;top:93.3px;width:2.8px;height:2.8px;background:#2b2f45;border-radius:50%"></div>
<span class="t dcom" style="left:469px;top:86px">−</span>
<div class="r" style="left:481.1px;top:93.3px;width:2.8px;height:2.8px;background:#2b2f45;border-radius:50%"></div>
<span class="t dcom" style="left:487px;top:86px">If</span>
<div class="r" style="left:508.1px;top:93.3px;width:2.8px;height:2.8px;background:#2b2f45;border-radius:50%"></div>
<span class="t dcom" style="left:514px;top:86px">`n`</span>
<div class="r" style="left:544.1px;top:93.3px;width:2.8px;height:2.8px;background:#2b2f45;border-radius:50%"></div>
<span class="t dcom" style="left:550px;top:86px">is</span>
<div class="r" style="left:571.1px;top:93.3px;width:2.8px;height:2.8px;background:#2b2f45;border-radius:50%"></div>
<span class="t dcom" style="left:577px;top:86px">0,</span>
<div class="r" style="left:598.1px;top:93.3px;width:2.8px;height:2.8px;background:#2b2f45;border-radius:50%"></div>
<span class="t dcom" style="left:604px;top:86px">`func`</span>
<div class="r" style="left:661.1px;top:93.3px;width:2.8px;height:2.8px;background:#2b2f45;border-radius:50%"></div>
<span class="t dcom" style="left:667px;top:86px">will</span>
<div class="r" style="left:706.1px;top:93.3px;width:2.8px;height:2.8px;background:#2b2f45;border-radius:50%"></div>
<span class="t dcom" style="left:712px;top:86px">never</span>
<div class="r" style="left:760.1px;top:93.3px;width:2.8px;height:2.8px;background:#2b2f45;border-radius:50%"></div>
<span class="t dcom" style="left:766px;top:86px">be</span>
<div class="r" style="left:787.1px;top:93.3px;width:2.8px;height:2.8px;background:#2b2f45;border-radius:50%"></div>
<span class="t dcom" style="left:793px;top:86px">called.</span>
<span class="t b ddot" style="left:856px;top:87px;font-size:16px">¶</span>
<span class="t dnum" style="left:406px;top:941px">1</span>
<span class="t dfgd" style="left:442px;top:941px">}</span>
<span class="t b ddot" style="left:451px;top:942px;font-size:16px">¶</span>
<div class="r" style="left:424px;top:941px;width:2px;height:19px;background:#758b55;"></div>
<span class="t stdark" style="left:19px;top:1036px">FZF</span>
<span class="t dteal" style="left:1630px;top:1036px">src/function/before.ts</span>
<span class="t stdark" style="left:1855px;top:1036px">hunks</span>
<div class="r" style="left:199px;top:105px;width:1521px;height:836px;background:#1e2030;"></div>
<div class="r" style="left:203px;top:114px;width:604px;height:818px;box-sizing:border-box;border:1px solid #589ed7;border-radius:4px"></div>
<svg class="r" style="left:0;top:0" width="1920" height="1080" shape-rendering="auto"><g fill="none" stroke="#589ed7" stroke-width="1"><path d="M815.5 931.5V118.5a4 4 0 0 1 4 -4H1216"/><path d="M1315 114.5H1711.5a4 4 0 0 1 4 4V257"/><path d="M815.5 927.5a4 4 0 0 0 4 4H1711.5a4 4 0 0 0 4 -4V922"/></g></svg>
<div class="r" style="left:1711px;top:257px;width:9px;height:665px;background:#589ed7;"></div>
<span class="t bor" style="left:1225px;top:105px">before.ts</span>
<svg class="r" style="left:208px;top:124px" width="9" height="19"><path d="M1.5 5.1L7.3 8.9L1.5 12.7" fill="none" stroke="#65bcff" stroke-width="1.7"/></svg>
<div class="r" style="left:226px;top:124px;width:9px;height:19px;background:#c8d3f5;"></div>
<span class="t com" style="left:730px;top:124px">6/6 (0)</span>
<div class="r" style="left:208px;top:152px;width:585px;height:1px;background:#ff966c;"></div>
<div class="r" style="left:212.5px;top:238px;width:589.5px;height:19px;background:#2d3f76;"></div>
<div class="r" style="left:208px;top:238px;width:4.5px;height:19px;background:#ff007c;"></div>
<svg class="r" style="left:226px;top:162px" width="9" height="19"><rect x="0" y="5" width="9" height="9" fill="#10c4e2"/><path d="M2.6 9.6h2.6M3.9 9.6v3.4M6 10.1h1.9M6 10.1v1.2h1.7v1.4h-1.9" fill="none" stroke="#1e2030" stroke-width="0.9" opacity="0.8"/></svg>
<span class="t dirp" style="left:244px;top:162px">src/function/</span>
<span class="t fg" style="left:361px;top:162px">ary.ts:21:</span>
<span class="t dred" style="left:451px;top:162px">−    return func.apply(this, args.sli··</span>
<svg class="r" style="left:226px;top:181px" width="9" height="19"><rect x="0" y="5" width="9" height="9" fill="#10c4e2"/><path d="M2.6 9.6h2.6M3.9 9.6v3.4M6 10.1h1.9M6 10.1v1.2h1.7v1.4h-1.9" fill="none" stroke="#1e2030" stroke-width="0.9" opacity="0.8"/></svg>
<span class="t dirp" style="left:244px;top:181px">src/function/</span>
<span class="t fg" style="left:361px;top:181px">ary.ts:21:</span>
<span class="t grn" style="left:451px;top:181px">+    return func.apply(this, args.sli··</span>
<svg class="r" style="left:226px;top:200px" width="9" height="19"><rect x="0" y="5" width="9" height="9" fill="#10c4e2"/><path d="M2.6 9.6h2.6M3.9 9.6v3.4M6 10.1h1.9M6 10.1v1.2h1.7v1.4h-1.9" fill="none" stroke="#1e2030" stroke-width="0.9" opacity="0.8"/></svg>
<span class="t dirp" style="left:244px;top:200px">src/function/</span>
<span class="t fg" style="left:361px;top:200px">before.ts:48:</span>
<span class="t grn" style="left:478px;top:200px">+</span>
<svg class="r" style="left:226px;top:219px" width="9" height="19"><rect x="0" y="5" width="9" height="9" fill="#10c4e2"/><path d="M2.6 9.6h2.6M3.9 9.6v3.4M6 10.1h1.9M6 10.1v1.2h1.7v1.4h-1.9" fill="none" stroke="#1e2030" stroke-width="0.9" opacity="0.8"/></svg>
<span class="t dirp" style="left:244px;top:219px">src/function/</span>
<span class="t fg" style="left:361px;top:219px">before.ts:49:</span>
<span class="t grn" style="left:478px;top:219px">+export function hello() {</span>
<svg class="r" style="left:226px;top:238px" width="9" height="19"><rect x="0" y="5" width="9" height="9" fill="#10c4e2"/><path d="M2.6 9.6h2.6M3.9 9.6v3.4M6 10.1h1.9M6 10.1v1.2h1.7v1.4h-1.9" fill="none" stroke="#2d3f76" stroke-width="0.9" opacity="0.8"/></svg>
<span class="t dirpb b" style="left:244px;top:238px">src/function/</span>
<span class="t fg b" style="left:361px;top:238px">before.ts:50:</span>
<span class="t grn b" style="left:478px;top:238px">+  console.log(&quot;Hello, World!&quot;)</span>
<svg class="r" style="left:226px;top:257px" width="9" height="19"><rect x="0" y="5" width="9" height="9" fill="#10c4e2"/><path d="M2.6 9.6h2.6M3.9 9.6v3.4M6 10.1h1.9M6 10.1v1.2h1.7v1.4h-1.9" fill="none" stroke="#1e2030" stroke-width="0.9" opacity="0.8"/></svg>
<span class="t dirp" style="left:244px;top:257px">src/function/</span>
<span class="t fg" style="left:361px;top:257px">before.ts:51:</span>
<span class="t grn" style="left:478px;top:257px">+}</span>
<div class="r" style="left:856px;top:884px;width:855px;height:19px;background:#2f334d;"></div>
<span class="t gut" style="left:829px;top:124px">10</span>
<svg class="r" style="left:865px;top:124px" width="9" height="19"><path d="M4.60 8.80L4.60 5.10M4.60 8.80L8.12 7.66M4.60 8.80L6.77 11.79M4.60 8.80L2.43 11.79M4.60 8.80L1.08 7.66" fill="none" stroke="#636da6" stroke-width="1.15" stroke-linecap="round"/></svg>
<span class="t com" style="left:883px;top:124px">− Tracks the number of calls.</span>
<span class="t gut" style="left:829px;top:143px">11</span>
<svg class="r" style="left:865px;top:143px" width="9" height="19"><path d="M4.60 8.80L4.60 5.10M4.60 8.80L8.12 7.66M4.60 8.80L6.77 11.79M4.60 8.80L2.43 11.79M4.60 8.80L1.08 7.66" fill="none" stroke="#636da6" stroke-width="1.15" stroke-linecap="round"/></svg>
<span class="t com" style="left:883px;top:143px">− Invokes `func` until the `n−1`−th call.</span>
<span class="t gut" style="left:829px;top:162px">12</span>
<svg class="r" style="left:865px;top:162px" width="9" height="19"><path d="M4.60 8.80L4.60 5.10M4.60 8.80L8.12 7.66M4.60 8.80L6.77 11.79M4.60 8.80L2.43 11.79M4.60 8.80L1.08 7.66" fill="none" stroke="#636da6" stroke-width="1.15" stroke-linecap="round"/></svg>
<span class="t com" style="left:883px;top:162px">− Returns `undefined` if the number of calls reaches or exceeds `n`, stopping further calls.</span>
<span class="t gut" style="left:829px;top:181px">13</span>
<svg class="r" style="left:865px;top:181px" width="9" height="19"><path d="M4.60 8.80L4.60 5.10M4.60 8.80L8.12 7.66M4.60 8.80L6.77 11.79M4.60 8.80L2.43 11.79M4.60 8.80L1.08 7.66" fill="none" stroke="#636da6" stroke-width="1.15" stroke-linecap="round"/></svg>
<span class="t pur" style="left:883px;top:181px">@throws</span>
<span class="t fgd" style="left:955px;top:181px">{</span>
<span class="t blue1" style="left:964px;top:181px">Error</span>
<span class="t fgd" style="left:1009px;top:181px">}</span>
<span class="t com" style="left:1027px;top:181px">− Throw an error if `n` is negative.</span>
<span class="t gut" style="left:829px;top:200px">14</span>
<svg class="r" style="left:865px;top:200px" width="9" height="19"><path d="M4.60 8.80L4.60 5.10M4.60 8.80L8.12 7.66M4.60 8.80L6.77 11.79M4.60 8.80L2.43 11.79M4.60 8.80L1.08 7.66" fill="none" stroke="#636da6" stroke-width="1.15" stroke-linecap="round"/></svg>
<span class="t pur" style="left:883px;top:200px">@example</span>
<span class="t gut" style="left:829px;top:219px">15</span>
<svg class="r" style="left:865px;top:219px" width="9" height="19"><path d="M4.60 8.80L4.60 5.10M4.60 8.80L8.12 7.66M4.60 8.80L6.77 11.79M4.60 8.80L2.43 11.79M4.60 8.80L1.08 7.66" fill="none" stroke="#636da6" stroke-width="1.15" stroke-linecap="round"/></svg>
<span class="t gut" style="left:829px;top:238px">16</span>
<svg class="r" style="left:865px;top:238px" width="9" height="19"><path d="M4.60 8.80L4.60 5.10M4.60 8.80L8.12 7.66M4.60 8.80L6.77 11.79M4.60 8.80L2.43 11.79M4.60 8.80L1.08 7.66" fill="none" stroke="#636da6" stroke-width="1.15" stroke-linecap="round"/></svg>
<span class="t com" style="left:883px;top:238px">const beforeFn = before(3, () =&gt; {</span>
<span class="t gut" style="left:829px;top:257px">17</span>
<svg class="r" style="left:865px;top:257px" width="9" height="19"><path d="M4.60 8.80L4.60 5.10M4.60 8.80L8.12 7.66M4.60 8.80L6.77 11.79M4.60 8.80L2.43 11.79M4.60 8.80L1.08 7.66" fill="none" stroke="#636da6" stroke-width="1.15" stroke-linecap="round"/></svg>
<span class="t com" style="left:892px;top:257px">console.log(&quot;called&quot;);</span>
<span class="t gut" style="left:829px;top:276px">18</span>
<svg class="r" style="left:865px;top:276px" width="9" height="19"><path d="M4.60 8.80L4.60 5.10M4.60 8.80L8.12 7.66M4.60 8.80L6.77 11.79M4.60 8.80L2.43 11.79M4.60 8.80L1.08 7.66" fill="none" stroke="#636da6" stroke-width="1.15" stroke-linecap="round"/></svg>
<span class="t com" style="left:883px;top:276px">})</span>
<span class="t gut" style="left:829px;top:295px">19</span>
<svg class="r" style="left:865px;top:295px" width="9" height="19"><path d="M4.60 8.80L4.60 5.10M4.60 8.80L8.12 7.66M4.60 8.80L6.77 11.79M4.60 8.80L2.43 11.79M4.60 8.80L1.08 7.66" fill="none" stroke="#636da6" stroke-width="1.15" stroke-linecap="round"/></svg>
<span class="t gut" style="left:829px;top:314px">20</span>
<svg class="r" style="left:865px;top:314px" width="9" height="19"><path d="M4.60 8.80L4.60 5.10M4.60 8.80L8.12 7.66M4.60 8.80L6.77 11.79M4.60 8.80L2.43 11.79M4.60 8.80L1.08 7.66" fill="none" stroke="#636da6" stroke-width="1.15" stroke-linecap="round"/></svg>
<span class="t com" style="left:883px;top:314px">//</span>
<span class="t fg" style="left:910px;top:314px">Will log</span>
<span class="t com" style="left:991px;top:314px">&#x27;called&#x27;.</span>
<span class="t gut" style="left:829px;top:333px">21</span>
<svg class="r" style="left:865px;top:333px" width="9" height="19"><path d="M4.60 8.80L4.60 5.10M4.60 8.80L8.12 7.66M4.60 8.80L6.77 11.79M4.60 8.80L2.43 11.79M4.60 8.80L1.08 7.66" fill="none" stroke="#636da6" stroke-width="1.15" stroke-linecap="round"/></svg>
<span class="t fg" style="left:883px;top:333px">beforeFn</span>
<span class="t com" style="left:955px;top:333px">();</span>
<span class="t gut" style="left:829px;top:352px">22</span>
<svg class="r" style="left:865px;top:352px" width="9" height="19"><path d="M4.60 8.80L4.60 5.10M4.60 8.80L8.12 7.66M4.60 8.80L6.77 11.79M4.60 8.80L2.43 11.79M4.60 8.80L1.08 7.66" fill="none" stroke="#636da6" stroke-width="1.15" stroke-linecap="round"/></svg>
<span class="t gut" style="left:829px;top:371px">23</span>
<svg class="r" style="left:865px;top:371px" width="9" height="19"><path d="M4.60 8.80L4.60 5.10M4.60 8.80L8.12 7.66M4.60 8.80L6.77 11.79M4.60 8.80L2.43 11.79M4.60 8.80L1.08 7.66" fill="none" stroke="#636da6" stroke-width="1.15" stroke-linecap="round"/></svg>
<span class="t com" style="left:883px;top:371px">//</span>
<span class="t fg" style="left:910px;top:371px">Will log</span>
<span class="t com" style="left:991px;top:371px">&#x27;called&#x27;.</span>
<span class="t gut" style="left:829px;top:390px">24</span>
<svg class="r" style="left:865px;top:390px" width="9" height="19"><path d="M4.60 8.80L4.60 5.10M4.60 8.80L8.12 7.66M4.60 8.80L6.77 11.79M4.60 8.80L2.43 11.79M4.60 8.80L1.08 7.66" fill="none" stroke="#636da6" stroke-width="1.15" stroke-linecap="round"/></svg>
<span class="t fg" style="left:883px;top:390px">beforeFn</span>
<span class="t com" style="left:955px;top:390px">();</span>
<span class="t gut" style="left:829px;top:409px">25</span>
<svg class="r" style="left:865px;top:409px" width="9" height="19"><path d="M4.60 8.80L4.60 5.10M4.60 8.80L8.12 7.66M4.60 8.80L6.77 11.79M4.60 8.80L2.43 11.79M4.60 8.80L1.08 7.66" fill="none" stroke="#636da6" stroke-width="1.15" stroke-linecap="round"/></svg>
<span class="t gut" style="left:829px;top:428px">26</span>
<svg class="r" style="left:865px;top:428px" width="9" height="19"><path d="M4.60 8.80L4.60 5.10M4.60 8.80L8.12 7.66M4.60 8.80L6.77 11.79M4.60 8.80L2.43 11.79M4.60 8.80L1.08 7.66" fill="none" stroke="#636da6" stroke-width="1.15" stroke-linecap="round"/></svg>
<span class="t com" style="left:883px;top:428px">//</span>
<span class="t fg" style="left:910px;top:428px">Will not log anything</span>
<span class="t blue5 b" style="left:1099px;top:428px">.</span>
<span class="t gut" style="left:829px;top:447px">27</span>
<svg class="r" style="left:865px;top:447px" width="9" height="19"><path d="M4.60 8.80L4.60 5.10M4.60 8.80L8.12 7.66M4.60 8.80L6.77 11.79M4.60 8.80L2.43 11.79M4.60 8.80L1.08 7.66" fill="none" stroke="#636da6" stroke-width="1.15" stroke-linecap="round"/></svg>
<span class="t fg" style="left:883px;top:447px">beforeFn</span>
<span class="t com" style="left:955px;top:447px">();</span>
<span class="t gut" style="left:829px;top:466px">28</span>
<svg class="r" style="left:865px;top:466px" width="9" height="19"><path d="M4.60 8.80L4.60 5.10M4.60 8.80L8.12 7.66M4.60 8.80L6.77 11.79M4.60 8.80L2.43 11.79M4.60 8.80L1.08 7.66" fill="none" stroke="#636da6" stroke-width="1.15" stroke-linecap="round"/></svg>
<span class="t com" style="left:874px;top:466px">/</span>
<span class="t gut" style="left:829px;top:485px">29</span>
<span class="t gut" style="left:829px;top:504px">30</span>
<span class="t cyan" style="left:856px;top:504px">export</span>
<span class="t mag" style="left:919px;top:504px">function</span>
<span class="t blue" style="left:1000px;top:504px">before</span>
<span class="t fgd" style="left:1054px;top:504px">&lt;</span>
<span class="t blue1" style="left:1063px;top:504px">F</span>
<span class="t pur" style="left:1081px;top:504px">extends</span>
<span class="t fgd" style="left:1153px;top:504px">(</span>
<span class="t blue5 b" style="left:1162px;top:504px">...</span>
<span class="t yel" style="left:1189px;top:504px">args</span>
<span class="t blue5 b" style="left:1225px;top:504px">:</span>
<span class="t blue1" style="left:1243px;top:504px">any</span>
<span class="t fgd" style="left:1270px;top:504px">[])</span>
<span class="t blue5" style="left:1306px;top:504px">=&gt;</span>
<span class="t blue1" style="left:1333px;top:504px">any</span>
<span class="t fgd" style="left:1360px;top:504px">&gt;(</span>
<span class="t gut" style="left:829px;top:523px">31</span>
<span class="t yel" style="left:874px;top:523px">n</span>
<span class="t blue5 b" style="left:883px;top:523px">:</span>
<span class="t blue1" style="left:901px;top:523px">number</span>
<span class="t blue5 b" style="left:955px;top:523px">,</span>
<span class="t gut" style="left:829px;top:542px">32</span>
<span class="t yel" style="left:874px;top:542px">func</span>
<span class="t blue5 b" style="left:910px;top:542px">:</span>
<span class="t blue1" style="left:928px;top:542px">F</span>
<span class="t gut" style="left:829px;top:561px">33</span>
<span class="t fgd" style="left:856px;top:561px">)</span>
<span class="t blue5 b" style="left:865px;top:561px">:</span>
<span class="t fgd" style="left:883px;top:561px">(</span>
<span class="t blue5 b" style="left:892px;top:561px">...</span>
<span class="t yel" style="left:919px;top:561px">args</span>
<span class="t blue5 b" style="left:955px;top:561px">:</span>
<span class="t blue1" style="left:973px;top:561px">Parameters</span>
<span class="t fgd" style="left:1063px;top:561px">&lt;</span>
<span class="t blue1" style="left:1072px;top:561px">F</span>
<span class="t fgd" style="left:1081px;top:561px">&gt;)</span>
<span class="t blue5" style="left:1108px;top:561px">=&gt;</span>
<span class="t blue1" style="left:1135px;top:561px">ReturnType</span>
<span class="t fgd" style="left:1225px;top:561px">&lt;</span>
<span class="t blue1" style="left:1234px;top:561px">F</span>
<span class="t fgd" style="left:1243px;top:561px">&gt;</span>
<span class="t blue5" style="left:1261px;top:561px">|</span>
<span class="t blue1" style="left:1279px;top:561px">undefined</span>
<span class="t fgd" style="left:1369px;top:561px">{</span>
<span class="t gut" style="left:829px;top:580px">34</span>
<span class="t mag" style="left:874px;top:580px">if</span>
<span class="t fgd" style="left:901px;top:580px">(</span>
<span class="t blue5" style="left:910px;top:580px">!</span>
<span class="t blue" style="left:919px;top:580px">Number</span>
<span class="t blue5 b" style="left:973px;top:580px">.</span>
<span class="t blue" style="left:982px;top:580px">isInteger</span>
<span class="t fgd" style="left:1063px;top:580px">(</span>
<span class="t fg" style="left:1072px;top:580px">n</span>
<span class="t fgd" style="left:1081px;top:580px">)</span>
<span class="t blue5" style="left:1099px;top:580px">||</span>
<span class="t fg" style="left:1126px;top:580px">n</span>
<span class="t blue5" style="left:1144px;top:580px">&lt;</span>
<span class="t ora" style="left:1162px;top:580px">0</span>
<span class="t fgd" style="left:1171px;top:580px">)</span>
<span class="t fgd" style="left:1189px;top:580px">{</span>
<span class="t gut" style="left:829px;top:599px">35</span>
<span class="t mag" style="left:892px;top:599px">throw</span>
<span class="t blue5" style="left:946px;top:599px">new</span>
<span class="t blue" style="left:982px;top:599px">Error</span>
<span class="t fgd" style="left:1027px;top:599px">(</span>
<span class="t grn" style="left:1036px;top:599px">&#x27;n must be a non−negative integer.&#x27;</span>
<span class="t fgd" style="left:1351px;top:599px">)</span>
<span class="t blue5 b" style="left:1360px;top:599px">;</span>
<span class="t gut" style="left:829px;top:618px">36</span>
<span class="t fgd" style="left:874px;top:618px">}</span>
<span class="t gut" style="left:829px;top:637px">37</span>
<span class="t gut" style="left:829px;top:656px">38</span>
<span class="t pur" style="left:874px;top:656px">let</span>
<span class="t fg" style="left:910px;top:656px">counter</span>
<span class="t blue5" style="left:982px;top:656px">=</span>
<span class="t ora" style="left:1000px;top:656px">0</span>
<span class="t blue5 b" style="left:1009px;top:656px">;</span>
<span class="t gut" style="left:829px;top:675px">39</span>
<span class="t gut" style="left:829px;top:694px">40</span>
<span class="t pur" style="left:874px;top:694px">return</span>
<span class="t fgd" style="left:937px;top:694px">(</span>
<span class="t blue5 b" style="left:946px;top:694px">...</span>
<span class="t yel" style="left:973px;top:694px">args</span>
<span class="t blue5 b" style="left:1009px;top:694px">:</span>
<span class="t blue1" style="left:1027px;top:694px">Parameters</span>
<span class="t fgd" style="left:1117px;top:694px">&lt;</span>
<span class="t blue1" style="left:1126px;top:694px">F</span>
<span class="t fgd" style="left:1135px;top:694px">&gt;)</span>
<span class="t blue5" style="left:1162px;top:694px">=&gt;</span>
<span class="t fgd" style="left:1189px;top:694px">{</span>
<span class="t gut" style="left:829px;top:713px">41</span>
<span class="t mag" style="left:892px;top:713px">if</span>
<span class="t fgd" style="left:919px;top:713px">(</span>
<span class="t blue5" style="left:928px;top:713px">++</span>
<span class="t fg" style="left:946px;top:713px">counter</span>
<span class="t blue5" style="left:1018px;top:713px">&lt;</span>
<span class="t fg" style="left:1036px;top:713px">n</span>
<span class="t fgd" style="left:1045px;top:713px">)</span>
<span class="t fgd" style="left:1063px;top:713px">{</span>
<span class="t gut" style="left:829px;top:732px">42</span>
<span class="t pur" style="left:910px;top:732px">return</span>
<span class="t blue" style="left:973px;top:732px">func</span>
<span class="t fgd" style="left:1009px;top:732px">(</span>
<span class="t blue5 b" style="left:1018px;top:732px">...</span>
<span class="t fg" style="left:1045px;top:732px">args</span>
<span class="t fgd" style="left:1081px;top:732px">)</span>
<span class="t blue5 b" style="left:1090px;top:732px">;</span>
<span class="t gut" style="left:829px;top:751px">43</span>
<span class="t fgd" style="left:892px;top:751px">}</span>
<span class="t gut" style="left:829px;top:770px">44</span>
<span class="t gut" style="left:829px;top:789px">45</span>
<span class="t pur" style="left:892px;top:789px">return</span>
<span class="t blue1" style="left:955px;top:789px">undefined</span>
<span class="t blue5 b" style="left:1036px;top:789px">;</span>
<span class="t gut" style="left:829px;top:808px">46</span>
<span class="t fgd" style="left:874px;top:808px">}</span>
<span class="t blue5 b" style="left:883px;top:808px">;</span>
<span class="t gut" style="left:829px;top:827px">47</span>
<span class="t fgd" style="left:856px;top:827px">}</span>
<span class="t gut" style="left:829px;top:846px">48</span>
<span class="t gut" style="left:829px;top:865px">49</span>
<span class="t cyan" style="left:856px;top:865px">export</span>
<span class="t mag" style="left:919px;top:865px">function</span>
<span class="t blue" style="left:1000px;top:865px">hello</span>
<span class="t fgd" style="left:1045px;top:865px">()</span>
<span class="t fgd" style="left:1072px;top:865px">{</span>
<span class="t ora b" style="left:829px;top:884px">50</span>
<span class="t red" style="left:874px;top:884px">console</span>
<span class="t blue5 b" style="left:937px;top:884px">.</span>
<span class="t blue" style="left:946px;top:884px">log</span>
<span class="t fgd" style="left:973px;top:884px">(</span>
<span class="t grn" style="left:982px;top:884px">&quot;Hello, World!&quot;</span>
<span class="t fgd" style="left:1117px;top:884px">)</span>
<span class="t gut" style="left:829px;top:903px">51</span>
<span class="t fgd" style="left:856px;top:903px">}</span>
</div></body></html>
